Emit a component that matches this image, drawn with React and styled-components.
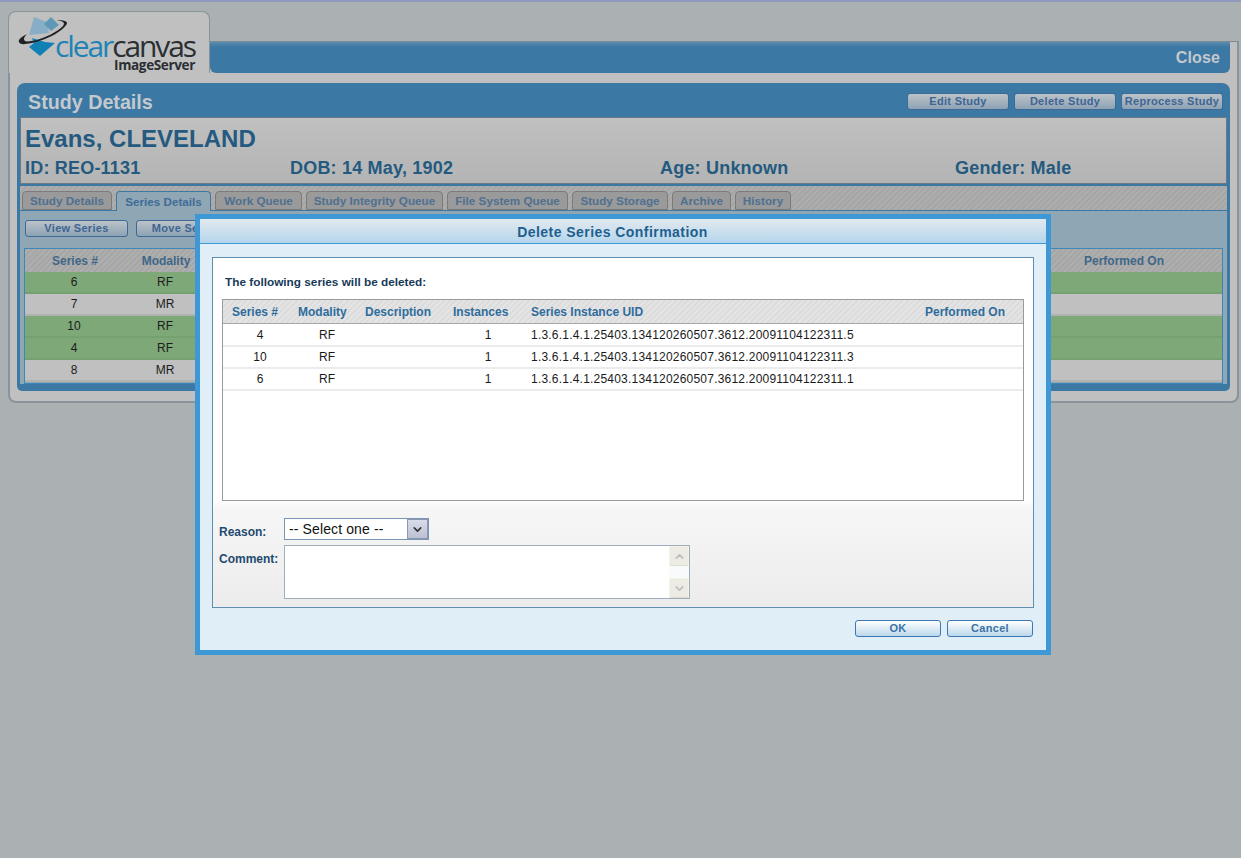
import React from "react";
import styled, { createGlobalStyle } from "styled-components";
import { ChevronDown, ChevronUp } from "lucide-react";

const Global = createGlobalStyle`
  html, body { margin: 0; padding: 0; background: #abb0b2; }
  body { font-family: "Liberation Sans", Arial, sans-serif; font-size: 12px; }
`;

const Page = styled.div`
  position: relative;
  width: 1241px;
  height: 858px;
  overflow: hidden;
  box-sizing: border-box;
  background: #abb0b2;
  border-top: 2px solid #9199bd;
  padding: 9px 2px 0 8px;
`;
const Header = styled.div`
  display: flex;
  height: 62px;
`;
const LogoTab = styled.div`
  position: relative;
  box-sizing: border-box;
  width: 202px;
  flex: none;
  background: #c0c0c0;
  border: 1px solid #87949b;
  border-bottom: 0;
  border-radius: 8px 8px 0 0;
`;
const LogoMark = styled.svg`
  position: absolute;
  left: 8px;
  top: 2px;
`;
const Wordmark = styled.div`
  position: absolute;
  left: 46px;
  top: 23px;
  font-family: "Open Sans", sans-serif;
  font-size: 30px;
  line-height: 22px;
  letter-spacing: -2.1px;
  white-space: nowrap;
  color: #2a2f33;
`;
const Clear = styled.span`
  color: #1f83b5;
`;
const SubMark = styled.div`
  position: absolute;
  right: 14px;
  top: 46px;
  font-family: "Open Sans", sans-serif;
  font-weight: 700;
  font-size: 13.5px;
  line-height: 14px;
  letter-spacing: -0.35px;
  color: #2a2f33;
`;
const HeaderRest = styled.div`
  flex: 1;
  margin-top: 30px;
  background: #c0c0c0;
  border-top: 1px solid #7c8a92;
  border-right: 2px solid #87949b;
  padding-right: 7px;
  display: flex;
`;
const CloseBar = styled.div`
  flex: 1;
  box-sizing: border-box;
  background: linear-gradient(#5b8cb0, #3b78a4 5px);
  border-radius: 0 0 6px 6px;
  display: flex;
  align-items: center;
  justify-content: flex-end;
  padding: 0 10px 0 0;
  font-weight: 700;
  font-size: 16px;
  letter-spacing: 0.15px;
  color: #c4c9cd;
`;
const Card = styled.div`
  box-sizing: border-box;
  height: 330px;
  background: #c0c0c0;
  border: 2px solid #87949b;
  border-top: 0;
  border-radius: 0 0 8px 8px;
  padding: 10px 7px 10px 7px;
`;
const Panel = styled.div`
  box-sizing: border-box;
  height: 308px;
  background: #3b78a4;
  border-radius: 8px 8px 5px 5px;
  padding: 0 3px 8px;
  display: flex;
  flex-direction: column;
`;
const TitleRow = styled.div`
  display: flex;
  align-items: center;
  justify-content: space-between;
  height: 34px;
  flex: none;
  padding: 0 4px 0 8px;
`;
const PanelTitle = styled.div`
  font-weight: 700;
  font-size: 19.7px;
  padding-top: 4px;
  color: #c4c9cd;
`;
const Actions = styled.div`
  display: flex;
  gap: 5px;
  padding-top: 2px;
`;
const DimButton = styled.div`
  box-sizing: border-box;
  width: ${(p) => p.$w || 102}px;
  height: 17px;
  padding-bottom: 1px;
  border: 1px solid #3d6a96;
  border-radius: 3px;
  background: linear-gradient(#bcc3c8, #8da2b4);
  display: flex;
  align-items: center;
  justify-content: center;
  font-weight: 700;
  font-size: 11px;
  letter-spacing: 0.3px;
  white-space: nowrap;
  color: #3e6593;
`;
const Patient = styled.div`
  box-sizing: border-box;
  height: 67px;
  flex: none;
  border: 1px solid #6d7a84;
  background: linear-gradient(#c0c0c0, #b4b4b4);
  padding: 7px 4px 0;
  color: #245a80;
  font-weight: 700;
`;
const PatientName = styled.div`
  font-size: 24px;
  line-height: 28px;
`;
const PatientLine = styled.div`
  display: grid;
  grid-template-columns: 265px 370px 295px 1fr;
  font-size: 18px;
  line-height: 22px;
  margin-top: 4px;
  letter-spacing: 0.2px;
`;
const TabStrip = styled.div`
  box-sizing: border-box;
  height: 25px;
  flex: none;
  margin-top: 2px;
  border-bottom: 1px solid #3b78a4;
  background: repeating-linear-gradient(135deg, #a6a6a6 0 2px, #adadad 2px 4px);
  display: flex;
  align-items: flex-end;
  gap: 4px;
  padding-left: 2px;
`;
const Tab = styled.div`
  box-sizing: border-box;
  width: ${(p) => p.$w}px;
  height: ${(p) => (p.$active ? 20 : 19)}px;
  margin-bottom: ${(p) => (p.$active ? -1 : 0)}px;
  border: 1px solid ${(p) => (p.$active ? "#3b78a4" : "#7b7b7b")};
  border-bottom: ${(p) => (p.$active ? "0" : "1px solid #7b7b7b")};
  border-radius: 4px 4px 0 0;
  background: ${(p) => (p.$active ? "#8fa6b5" : "#9a9a9a")};
  display: flex;
  align-items: center;
  justify-content: center;
  font-weight: 700;
  font-size: 11.7px;
  white-space: nowrap;
  color: ${(p) => (p.$active ? "#3f6c96" : "#4f7090")};
`;
const TabBody = styled.div`
  flex: 1;
  background: #8fa6b5;
  padding: 9px 4px 0;
`;
const ToolRow = styled.div`
  display: flex;
  gap: 8px;
  padding-left: 1px;
`;
const BackTable = styled.div`
  box-sizing: border-box;
  margin-top: 11px;
  height: 136px;
  border: 1px solid #3b87b8;
`;
const BackHead = styled.div`
  display: grid;
  grid-template-columns: 100px 82px 1fr 138px;
  align-items: center;
  height: 23px;
  background: repeating-linear-gradient(135deg, #a6a6a6 0 2px, #aeaeae 2px 4px);
  font-weight: 700;
  color: #3f6788;
`;
const HeadCentered = styled.div`
  text-align: center;
`;
const BackRow = styled.div`
  display: grid;
  grid-template-columns: 98px 84px;
  align-items: center;
  height: 20px;
  border-bottom: 2px solid ${(p) => (p.$green ? "#75a070" : "#b2b2b2")};
  background: ${(p) => (p.$green ? "#7ea878" : "#c0c0c0")};
  color: #1c1c1c;
  text-align: center;
`;

const Modal = styled.div`
  position: absolute;
  left: 195px;
  top: 212px;
  box-sizing: border-box;
  width: 856px;
  height: 441px;
  border: 5px solid #3d98d5;
  background: #e0eef8;
  display: flex;
  flex-direction: column;
`;
const ModalTitle = styled.div`
  height: 25px;
  flex: none;
  box-sizing: border-box;
  padding: 2px 21px 0 0;
  border-bottom: 1px solid #3d98d5;
  background: linear-gradient(#e2e9ef, #b5d6ec);
  display: flex;
  align-items: center;
  justify-content: center;
  font-weight: 700;
  font-size: 14px;
  letter-spacing: 0.45px;
  color: #1f5f8f;
`;
const ModalInner = styled.div`
  box-sizing: border-box;
  height: 351px;
  margin: 13px 12px 0 12px;
  flex: none;
  border: 1px solid #5f8fb0;
  background: linear-gradient(#fff 0, #fff 69%, #f6f6f6 72%, #ececec 100%);
  padding: 0 9px;
`;
const Lead = styled.div`
  margin: 17px 0 0 3px;
  height: 14px;
  line-height: 14px;
  font-weight: 700;
  font-size: 11.8px;
  color: #173a58;
`;
const ListBox = styled.div`
  box-sizing: border-box;
  margin-top: 10px;
  height: 202px;
  border: 1px solid #9a9a9a;
  background: #fff;
`;
const ListHead = styled.div`
  box-sizing: border-box;
  display: grid;
  grid-template-columns: 66px 67px 88px 78px 394px 1fr;
  align-items: center;
  height: 24px;
  margin-bottom: 1px;
  border-bottom: 1px solid #a8a8a8;
  background: repeating-linear-gradient(135deg, #dcdcdc 0 2px, #e4e4e4 2px 4px);
  font-weight: 700;
  color: #2f6c9c;
`;
const ListHeadCell = styled.div`
  padding-left: 9px;
  white-space: nowrap;
`;
const ListRow = styled.div`
  display: grid;
  grid-template-columns: 74px 60px 97px 68px 1fr;
  align-items: center;
  height: 20px;
  border-bottom: 2px solid #ececec;
  color: #1a1a1a;
`;
const Centered = styled.div`
  text-align: center;
`;
const Uid = styled.div`
  padding-left: 9px;
  letter-spacing: 0.21px;
`;
const FormRow = styled.div`
  display: flex;
  margin: ${(p) => p.$mt}px 0 0 -3px;
`;
const FieldLabel = styled.label`
  width: 65px;
  flex: none;
  font-weight: 700;
  font-size: 12px;
  line-height: 14px;
  padding-top: ${(p) => p.$pt}px;
  color: #1f4a70;
`;
const SelectBox = styled.div`
  box-sizing: border-box;
  width: 145px;
  height: 22px;
  border: 1px solid #7b96b4;
  background: #fff;
  display: flex;
  align-items: center;
  justify-content: space-between;
  padding-left: 4px;
  font-size: 14px;
  letter-spacing: 0.12px;
  color: #111;
`;
const SelectArrow = styled.div`
  box-sizing: border-box;
  width: 21px;
  height: 20px;
  background: linear-gradient(#d8dbe8, #bcc0d4);
  border: 1px solid #8c97ac;
  display: flex;
  align-items: center;
  justify-content: center;
  color: #333;
`;
const CommentBox = styled.div`
  box-sizing: border-box;
  width: 406px;
  height: 54px;
  border: 1px solid #9fadbd;
  background: #fff;
  display: flex;
  justify-content: flex-end;
`;
const ScrollTrack = styled.div`
  width: 20px;
  background: #f9fafb;
  display: flex;
  flex-direction: column;
  justify-content: space-between;
`;
const ScrollBtn = styled.div`
  height: 20px;
  box-sizing: border-box;
  border: 1px solid #f2f2e8;
  border-bottom-color: #dcdccc;
  border-radius: 2px;
  background: #ecece4;
  display: flex;
  align-items: center;
  justify-content: center;
  color: #bdbdbd;
`;
const ModalFoot = styled.div`
  display: flex;
  justify-content: flex-end;
  gap: 6px;
  margin: 12px 13px 0 0;
`;
const ModalButton = styled.div`
  box-sizing: border-box;
  width: 86px;
  height: 17px;
  padding-bottom: 1px;
  border: 1px solid #3b78b4;
  border-radius: 3px;
  background: linear-gradient(#fff, #bcd8ec);
  display: flex;
  align-items: center;
  justify-content: center;
  font-weight: 700;
  font-size: 11px;
  letter-spacing: 0.3px;
  color: #3b72a8;
`;

const tabs = [
  ["Study Details", 90],
  ["Series Details", 95, true],
  ["Work Queue", 87],
  ["Study Integrity Queue", 137],
  ["File System Queue", 121],
  ["Study Storage", 96],
  ["Archive", 59],
  ["History", 56],
];
const backRows = [
  ["6", "RF", true],
  ["7", "MR", false],
  ["10", "RF", true],
  ["4", "RF", true],
  ["8", "MR", false],
];
const listRows = [
  ["4", "RF", "1.3.6.1.4.1.25403.134120260507.3612.20091104122311.5"],
  ["10", "RF", "1.3.6.1.4.1.25403.134120260507.3612.20091104122311.3"],
  ["6", "RF", "1.3.6.1.4.1.25403.134120260507.3612.20091104122311.1"],
];
const listHead = ["Series #", "Modality", "Description", "Instances", "Series Instance UID", "Performed On"];

export default function App() {
  return (
    <Page>
      <Global />
      <Header>
        <LogoTab>
          <LogoMark width="64" height="50" viewBox="0 0 64 50">
            <polygon points="17,3 30,8 32,19 12,21" fill="#87aec6" />
            <polygon points="34,3 42,11 34,17 27,10" fill="#5f97b6" />
            <polygon points="15,24 28,28 38,29 23,42 12,33 17,29" fill="#1180b5" />
            <path d="M40,6 C46,6 50,7 50,9 C50,14 30,28 8,30 C3,31 1,28 2,26 C3,24 6,22 10,20 C6,24 6,27 10,27.5 C25,27 46,15 47,10 C47,8 45,7 40,6 Z" fill="#1f2226" />
          </LogoMark>
          <Wordmark><Clear>clear</Clear>canvas</Wordmark>
          <SubMark>ImageServer</SubMark>
        </LogoTab>
        <HeaderRest>
          <CloseBar>Close</CloseBar>
        </HeaderRest>
      </Header>
      <Card>
        <Panel>
          <TitleRow>
            <PanelTitle>Study Details</PanelTitle>
            <Actions>
              <DimButton>Edit Study</DimButton>
              <DimButton>Delete Study</DimButton>
              <DimButton>Reprocess Study</DimButton>
            </Actions>
          </TitleRow>
          <Patient>
            <PatientName>Evans, CLEVELAND</PatientName>
            <PatientLine>
              <div>ID: REO-1131</div>
              <div>DOB: 14 May, 1902</div>
              <div>Age: Unknown</div>
              <div>Gender: Male</div>
            </PatientLine>
          </Patient>
          <TabStrip>
            {tabs.map(([label, w, active]) => (
              <Tab key={label} $w={w} $active={active}>{label}</Tab>
            ))}
          </TabStrip>
          <TabBody>
            <ToolRow>
              <DimButton $w={103}>View Series</DimButton>
              <DimButton $w={99}>Move Series</DimButton>
            </ToolRow>
            <BackTable>
              <BackHead>
                <HeadCentered>Series #</HeadCentered>
                <HeadCentered>Modality</HeadCentered>
                <div />
                <div>Performed On</div>
              </BackHead>
              {backRows.map(([n, m, g], i) => (
                <BackRow key={i} $green={g}>
                  <div>{n}</div>
                  <div>{m}</div>
                </BackRow>
              ))}
            </BackTable>
          </TabBody>
        </Panel>
      </Card>
      <Modal>
        <ModalTitle>Delete Series Confirmation</ModalTitle>
        <ModalInner>
          <Lead>The following series will be deleted:</Lead>
          <ListBox>
            <ListHead>
              {listHead.map((h) => <ListHeadCell key={h}>{h}</ListHeadCell>)}
            </ListHead>
            {listRows.map(([n, m, uid]) => (
              <ListRow key={n}>
                <Centered>{n}</Centered>
                <Centered>{m}</Centered>
                <div />
                <Centered>1</Centered>
                <Uid>{uid}</Uid>
              </ListRow>
            ))}
          </ListBox>
          <FormRow $mt={17}>
            <FieldLabel $pt={7}>Reason:</FieldLabel>
            <SelectBox>
              -- Select one --
              <SelectArrow><ChevronDown size={13} strokeWidth={3} /></SelectArrow>
            </SelectBox>
          </FormRow>
          <FormRow $mt={5}>
            <FieldLabel $pt={7}>Comment:</FieldLabel>
            <CommentBox>
              <ScrollTrack>
                <ScrollBtn><ChevronUp size={13} strokeWidth={3} /></ScrollBtn>
                <ScrollBtn><ChevronDown size={13} strokeWidth={3} /></ScrollBtn>
              </ScrollTrack>
            </CommentBox>
          </FormRow>
        </ModalInner>
        <ModalFoot>
          <ModalButton>OK</ModalButton>
          <ModalButton>Cancel</ModalButton>
        </ModalFoot>
      </Modal>
    </Page>
  );
}
